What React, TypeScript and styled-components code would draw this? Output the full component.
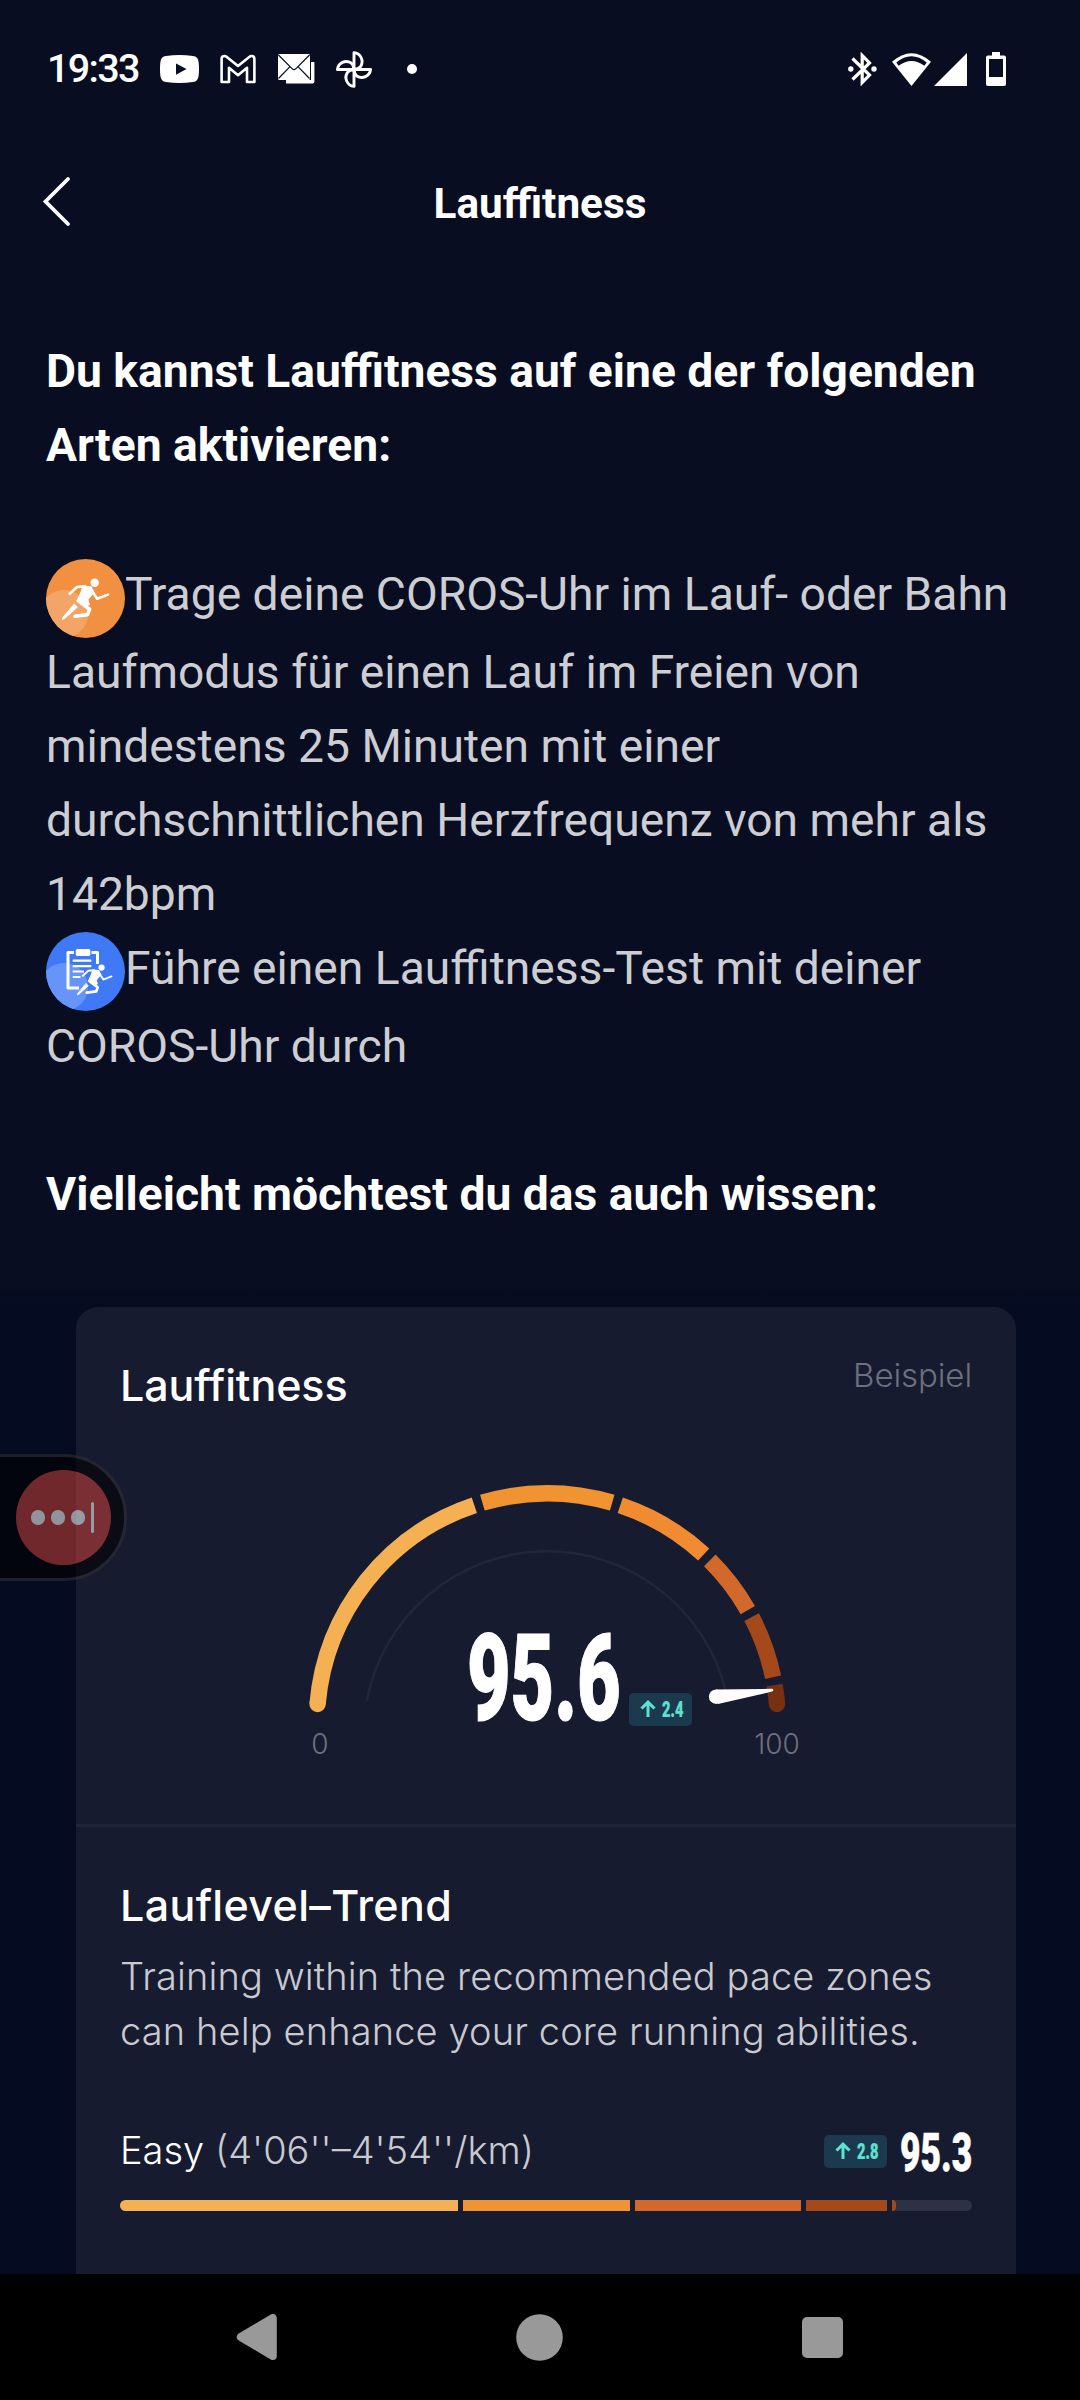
import React from "react";
import styled, { createGlobalStyle } from "styled-components";

const GlobalStyle = createGlobalStyle`
  * { box-sizing: border-box; }
  body { margin: 0; background: #080d21; }
`;

const roboto = `Roboto, "Noto Sans", sans-serif`;
const inter = `Inter, "Noto Sans", sans-serif`;

const Screen = styled.div`
  position: relative;
  display: flex;
  flex-direction: column;
  width: 1080px;
  height: 2400px;
  overflow: hidden;
  background: #080d21;
  color: #fff;
  font-family: ${roboto};
`;

const StatusBar = styled.header`
  display: flex;
  flex: none;
  align-items: center;
  justify-content: space-between;
  height: 138px;
  padding: 0 74px 0 47px;
`;

const StatusGroup = styled.div`
  display: flex;
  align-items: center;
`;

const Clock = styled.span`
  width: 113px;
  font-size: 39.5px;
  font-weight: 500;
  line-height: 40px;
  letter-spacing: -1.7px;
`;

const StatusIcon = styled.svg<{ $gap?: number }>`
  display: block;
  flex: none;
  margin-left: ${(p) => p.$gap ?? 0}px;
`;

const TitleBar = styled.div`
  display: grid;
  flex: none;
  grid-template-columns: 120px 1fr 120px;
  align-items: center;
  height: 126px;
`;

const BackButton = styled.button`
  display: flex;
  padding: 0 0 0 41px;
  border: 0;
  background: none;
`;

const PageTitle = styled.h1`
  margin: 6px 0 0;
  font-size: 42.3px;
  font-weight: 700;
  line-height: 50px;
  text-align: center;
`;

const Content = styled.main`
  flex: 1;
  min-height: 0;
  padding-top: 71px;
  overflow: hidden;
`;

const Article = styled.article`
  padding: 0 46px 51px;
  font-size: 46.2px;
  line-height: 73.92px;
`;

const Heading = styled.h2`
  margin: 0;
  font-size: inherit;
  font-weight: 700;
`;

const Steps = styled.div`
  margin: 75.5px 0 74.6px;
  color: #cdced3;
`;

const Step = styled.p`
  margin: 0;
`;

const StepIcon = styled.svg`
  width: 79px;
  height: 79px;
  margin-bottom: -1.8px;
  vertical-align: -25.8px;
`;

const CardArea = styled.div`
  padding: 24px 64px 0 76px;
  background: linear-gradient(#080d21, #050b20 24px);
`;

const Card = styled.section`
  height: 1100px;
  border-radius: 22px;
  background: #171b30;
  font-family: ${inter};
`;

const ScoreSection = styled.div`
  position: relative;
  height: 520px;
  padding: 49px 44px 0 44px;
  border-bottom: 3px solid #202438;
`;

const CardHeader = styled.div`
  display: flex;
  align-items: flex-start;
  justify-content: space-between;
`;

const CardTitle = styled.h3<{ $tracking: number }>`
  margin: 0;
  font-size: 43px;
  font-weight: 500;
  line-height: 58px;
  letter-spacing: ${(p) => p.$tracking}px;
`;

const ExampleTag = styled.span`
  margin-top: -1px;
  color: #6d707d;
  font-size: 33px;
  font-weight: 350;
  line-height: 40px;
  letter-spacing: -0.1px;
`;

const Gauge = styled.svg`
  position: absolute;
  left: 204px;
  top: 163px;
`;

const ScoreRow = styled.div`
  position: absolute;
  left: 391px;
  top: 328px;
  display: flex;
  align-items: flex-end;
  gap: 7px;
`;

const ScoreDelta = styled.div`
  margin-bottom: -1px;
`;

const Trend = styled.div`
  padding: 49px 44px 0 44px;
`;

const TrendText = styled.p`
  margin: 15px 0 0;
  color: #c9cad0;
  font-size: 38px;
  font-weight: 350;
  line-height: 55px;
  letter-spacing: 0.13px;
  white-space: nowrap;
`;

const PaceRow = styled.div`
  display: flex;
  align-items: center;
  justify-content: space-between;
  height: 56px;
  margin-top: 63px;
`;

const PaceLabel = styled.span`
  font-size: 38px;
  font-weight: 350;
`;

const PaceRange = styled.span`
  color: #c9cad0;
  font-weight: 300;
`;

const PaceScore = styled.div`
  display: flex;
  align-items: center;
  height: 40px;
  padding-top: 2px;
  gap: 13px;
`;

const PaceValue = styled.div`
  padding-top: 3px;
`;

const Badge = styled.div`
  display: flex;
  align-items: center;
  width: 63px;
  height: 33px;
  padding-left: 11px;
  gap: 6px;
  border-radius: 5px;
  background: #1c3a4d;
  color: #60e0d3;
`;

const Numerals = styled.span<{ $size: number; $width: number; $squeeze: number }>`
  display: block;
  width: ${(p) => p.$width}px;
  font-family: ${roboto};
  font-size: ${(p) => p.$size}px;
  font-weight: 700;
  line-height: 0.74;
  white-space: nowrap;
  -webkit-text-stroke: 0.01em currentColor;

  & > b {
    display: inline-block;
    transform: scaleX(${(p) => p.$squeeze});
    transform-origin: left center;
  }
`;

const Bar = styled.div`
  display: grid;
  grid-template-columns: 338px 167px 166px 81px 80px;
  justify-content: space-between;
  height: 11px;
  margin-top: 22px;
  border-radius: 6px;
  overflow: hidden;
`;

const BarPart = styled.div<{ $color: string; $fill?: string }>`
  background: ${(p) => p.$color};
  &::before {
    content: "";
    display: ${(p) => (p.$fill ? "block" : "none")};
    width: 4px;
    height: 11px;
    border-radius: 0 4px 4px 0;
    background: ${(p) => p.$fill ?? "none"};
  }
`;

const NavBar = styled.nav`
  display: flex;
  flex: none;
  align-items: center;
  justify-content: space-between;
  height: 126px;
  padding: 0 237px 0 236px;
  background: #000;
`;

const FloatingTab = styled.div`
  position: absolute;
  left: -3px;
  top: 1454px;
  width: 130px;
  height: 127px;
  padding: 13px 0 0 16px;
  border: 3px solid #303030;
  border-radius: 0 64px 64px 0;
  background: #000;
  opacity: 0.56;
`;

const RecordDot = styled.div`
  display: flex;
  align-items: center;
  width: 95px;
  height: 95px;
  padding-left: 15px;
  gap: 5.5px;
  border-radius: 50%;
  background: #c64038;
`;

const Dot = styled.i`
  width: 14.4px;
  height: 14.4px;
  border-radius: 50%;
  background: #fff;
`;

const Caret = styled.i`
  width: 3.5px;
  height: 31px;
  border-radius: 2px;
  background: #fff;
`;

function DeltaBadge({ value }: { value: string }) {
  return (
    <Badge>
      <svg width="16" height="18" viewBox="0 0 16 18" fill="none" stroke="currentColor" strokeWidth="3">
        <path d="M8 17V2.5M1.5 8.5 8 2.2l6.5 6.3" />
      </svg>
      <Numerals $size={22.5} $width={21} $squeeze={0.65}>
        <b>{value}</b>
      </Numerals>
    </Badge>
  );
}

const CX = 267.3;
const CY = 254;

function point(angle: number, radius: number, cy: number) {
  const rad = (angle * Math.PI) / 180;
  return `${(CX + radius * Math.sin(rad)).toFixed(2)} ${(cy - radius * Math.cos(rad)).toFixed(2)}`;
}

function arc(from: number, to: number, radius: number, cy = CY) {
  return `M${point(from, radius, cy)}A${radius} ${radius} 0 0 1 ${point(to, radius, cy)}`;
}

const zones = [
  { from: -85, to: -18.45, color: "#f4b052" },
  { from: -16.35, to: 16.35, color: "#f09432" },
  { from: 18.45, to: 42.7, color: "#f18b32" },
  { from: 44.8, to: 60.4, color: "#d2682a" },
  { from: 62.4, to: 78.3, color: "#a5491b" },
  { from: 80.3, to: 85, color: "#793010" },
];

function ScoreGauge() {
  return (
    <Gauge width="534" height="300" viewBox="0 0 534 300" fill="none">
      <path d={arc(-79.3, 76, 183.7, 265)} stroke="#22263a" strokeWidth="2.5" />
      <circle cx={CX - 229.7} cy={CY - 20} r="8.2" fill={zones[0].color} />
      <circle cx={CX + 229.7} cy={CY - 20} r="8.2" fill={zones[5].color} />
      {zones.map((z) => (
        <path key={z.from} d={arc(z.from, z.to, 230.6)} stroke={z.color} strokeWidth="16.4" />
      ))}
      <path d="M436 219.4 492 218.8q3 1 0 2.8L438 234Z" fill="#fff" />
      <circle cx="436.2" cy="226.7" r="7.3" fill="#fff" />
      <g fill="#6d707d" fontFamily="Inter, sans-serif" fontSize="28" fontWeight="350" textAnchor="middle">
        <text x="40" y="283.5">0</text>
        <text x="497" y="283.5">100</text>
      </g>
    </Gauge>
  );
}

function Runner() {
  return (
    <g fill="#fff" stroke="#fff" strokeLinecap="round" strokeLinejoin="round">
      <circle cx="48.7" cy="23.8" r="4.2" stroke="none" />
      <path d="M23.8 34.8 31 28 39 27.4" fill="none" strokeWidth="2.6" />
      <path d="M46 32 51.2 39.8 62 35.6" fill="none" strokeWidth="2.6" />
      <path d="M37 27.2 45 28 47.6 33 41.5 40.5 43 45.5 37.5 46.5 31.2 42.2 35.4 33.2Z" strokeWidth="1.6" />
      <path d="M35.5 44 43.7 50.2 41.6 55.6 29 57.3" fill="none" strokeWidth="3.6" />
      <path d="M28.2 45.4 31 48 18.2 59.6 16.6 60.2 17 58.6Z" strokeWidth="1.2" />
    </g>
  );
}

function RunIcon() {
  return (
    <StepIcon viewBox="0 0 79 79">
      <clipPath id="runClip"><circle cx="39.5" cy="39.5" r="39.5" /></clipPath>
      <circle cx="39.5" cy="39.5" r="39.5" fill="#f09040" />
      <circle cx="18" cy="55" r="24" fill="#f3a567" clipPath="url(#runClip)" />
      <Runner />
    </StepIcon>
  );
}

function TestIcon() {
  return (
    <StepIcon viewBox="0 0 79 79">
      <clipPath id="testClip"><circle cx="39.5" cy="39.5" r="39.5" /></clipPath>
      <circle cx="39.5" cy="39.5" r="39.5" fill="#3f79f6" />
      <circle cx="18" cy="55" r="24" fill="#6694f8" clipPath="url(#testClip)" />
      <path d="M28 20.5H22V56H33M45.5 20.5H51.5V32" fill="none" stroke="#fff" strokeWidth="3" strokeLinejoin="round" />
      <rect x="29.8" y="17" width="14.5" height="7" rx="1.6" fill="#fff" />
      <path d="M26.7 28.6H45.3M26.7 34.1H45.3M26.7 39.5H38M26.7 45H34.5" stroke="#fff" strokeWidth="2.2" />
      <g transform="translate(19 17.7) scale(.75)"><Runner /></g>
    </StepIcon>
  );
}

export default function App() {
  return (
    <>
      <GlobalStyle />
      <Screen>
        <StatusBar>
          <StatusGroup>
            <Clock>19:33</Clock>
            <StatusIcon width="39" height="28" viewBox="0 0 39 28">
              <path fill="#fff" fillRule="evenodd" d="M6 .9Q19.5-.9 33 .9Q38 1.4 38.6 7Q39.4 14 38.6 21Q38 26.6 33 27.1Q19.5 28.9 6 27.1Q1 26.6.4 21Q-.4 14 .4 7Q1 1.4 6 .9ZM16 8.4V19.8L26.5 14.1Z" />
            </StatusIcon>
            <StatusIcon $gap={21} width="36" height="30" viewBox="0 0 36 30" fill="none" stroke="#fff" strokeWidth="2.6" strokeLinejoin="round">
              <path d="M1.6 27.6V4.6Q1.6 1.6 4.4 1.6Q5.6 1.6 6.8 2.6L18 11.6 29.2 2.6Q30.4 1.6 31.6 1.6Q34.4 1.6 34.4 4.6V27.6H27V13.4L18 20.8 9 13.4V27.6Z" transform="translate(0 .4)" />
            </StatusIcon>
            <StatusIcon $gap={21.5} width="37" height="31" viewBox="0 0 37 31">
              <path d="M8 27.8H34.7V8" fill="none" stroke="#fff" strokeWidth="3.4" strokeLinejoin="round" />
              <rect x="0" y="0" width="32" height="26" rx="1.5" fill="#fff" />
              <path d="M.5 1 13.5 14.2Q16 17 18.5 14.2L31.5 1M.5 24.5 12 12.7M31.5 24.5 20 12.7" fill="none" stroke="#080d21" strokeWidth="1.2" />
            </StatusIcon>
            <StatusIcon $gap={21.5} width="36" height="37" viewBox="0 0 36 37" fill="none" stroke="#fff" strokeWidth="2.9" strokeLinejoin="round">
              <path d="M18 18.5V1.6A9 9 0 0 1 24.5 15.6Q22.5 18 18 18.5" />
              <path d="M18 18.5H34.6A9 9 0 0 1 20.8 25Q18.4 23 18 18.5" />
              <path d="M18 18.5V35.4A9 9 0 0 1 11.5 21.4Q13.5 19 18 18.5" />
              <path d="M18 18.5H1.4A9 9 0 0 1 15.2 12Q17.6 14 18 18.5" />
            </StatusIcon>
            <StatusIcon $gap={35} width="10" height="10" viewBox="0 0 10 10">
              <circle cx="5" cy="5" r="5" fill="#fff" />
            </StatusIcon>
          </StatusGroup>
          <StatusGroup>
            <StatusIcon width="29" height="34" viewBox="0 0 29 34">
              <path d="M4.5 6.5 21.5 23 14.2 30.5V3.5L21.5 11 4.5 27.5" fill="none" stroke="#fff" strokeWidth="3.2" />
              <circle cx="2.8" cy="17" r="2.7" fill="#fff" />
              <circle cx="26" cy="17" r="2.7" fill="#fff" />
            </StatusIcon>
            <StatusIcon $gap={15.5} width="39" height="33" viewBox="0 0 39 33">
              <path d="M0 8.8Q19.5-8.2 39 8.8L19.5 33Z" fill="#fff" />
              <path d="M4.3 9.5Q19.5-3 34.7 9.5L32.4 12.8Q19.5 3 6.6 12.8Z" fill="#080d21" />
            </StatusIcon>
            <StatusIcon $gap={3} width="33" height="33" viewBox="0 0 33 33">
              <path d="M33 0V33H0Z" fill="#fff" />
            </StatusIcon>
            <StatusIcon $gap={19} width="20" height="34" viewBox="0 0 20 34">
              <path fill="#fff" fillRule="evenodd" d="M6 0H14V3.5H18Q20 3.5 20 5.5V32Q20 34 18 34H2Q0 34 0 32V5.5Q0 3.5 2 3.5H6ZM3 7V25H17V7Z" />
            </StatusIcon>
          </StatusGroup>
        </StatusBar>

        <TitleBar>
          <BackButton aria-label="Zurück">
            <svg width="32" height="52" viewBox="0 0 32 52" fill="none" stroke="#fff" strokeWidth="3.8" strokeLinecap="round">
              <path d="M27 4 4.5 26.5 27 49" />
            </svg>
          </BackButton>
          <PageTitle>Lauffitness</PageTitle>
        </TitleBar>

        <Content>
          <Article>
            <Heading>Du kannst Lauffitness auf eine der folgenden Arten aktivieren:</Heading>
            <Steps>
              <Step>
                <RunIcon />Trage deine COROS-Uhr im Lauf- oder Bahn Laufmodus für einen Lauf im Freien von mindestens 25 Minuten mit einer durchschnittlichen Herzfrequenz von mehr als 142bpm
              </Step>
              <Step>
                <TestIcon />Führe einen Lauffitness-Test mit deiner COROS-Uhr durch
              </Step>
            </Steps>
            <Heading>Vielleicht möchtest du das auch wissen:</Heading>
          </Article>

          <CardArea>
            <Card>
              <ScoreSection>
                <CardHeader>
                  <CardTitle $tracking={-0.1}>Lauffitness</CardTitle>
                  <ExampleTag>Beispiel</ExampleTag>
                </CardHeader>
                <ScoreGauge />
                <ScoreRow>
                  <Numerals $size={121} $width={155} $squeeze={0.622}>
                    <b>95.6</b>
                  </Numerals>
                  <ScoreDelta>
                    <DeltaBadge value="2.4" />
                  </ScoreDelta>
                </ScoreRow>
              </ScoreSection>
              <Trend>
                <CardTitle $tracking={0.35}>Lauflevel–Trend</CardTitle>
                <TrendText>
                  Training within the recommended pace zones
                  <br />
                  can help enhance your core running abilities.
                </TrendText>
                <PaceRow>
                  <PaceLabel>
                    Easy <PaceRange>(4'06''–4'54''/km)</PaceRange>
                  </PaceLabel>
                  <PaceScore>
                    <DeltaBadge value="2.8" />
                    <PaceValue>
                      <Numerals $size={54} $width={72} $squeeze={0.655}>
                        <b>95.3</b>
                      </Numerals>
                    </PaceValue>
                  </PaceScore>
                </PaceRow>
                <Bar>
                  <BarPart $color="#f4b052" />
                  <BarPart $color="#f09432" />
                  <BarPart $color="#d2682a" />
                  <BarPart $color="#a5491b" />
                  <BarPart $color="#2e3145" $fill="#a5491b" />
                </Bar>
              </Trend>
            </Card>
          </CardArea>
        </Content>

        <NavBar>
          <svg width="41" height="46" viewBox="0 0 41 46">
            <path d="M36 4V42L4 23Z" fill="#999" stroke="#999" strokeWidth="8" strokeLinejoin="round" transform="translate(.8 0)" />
          </svg>
          <svg width="47" height="47" viewBox="0 0 47 47">
            <circle cx="23.5" cy="23.5" r="23.3" fill="#999" />
          </svg>
          <svg width="41" height="41" viewBox="0 0 41 41">
            <rect width="41" height="41" rx="5" fill="#999" />
          </svg>
        </NavBar>

        <FloatingTab>
          <RecordDot>
            <Dot />
            <Dot />
            <Dot />
            <Caret />
          </RecordDot>
        </FloatingTab>
      </Screen>
    </>
  );
}
